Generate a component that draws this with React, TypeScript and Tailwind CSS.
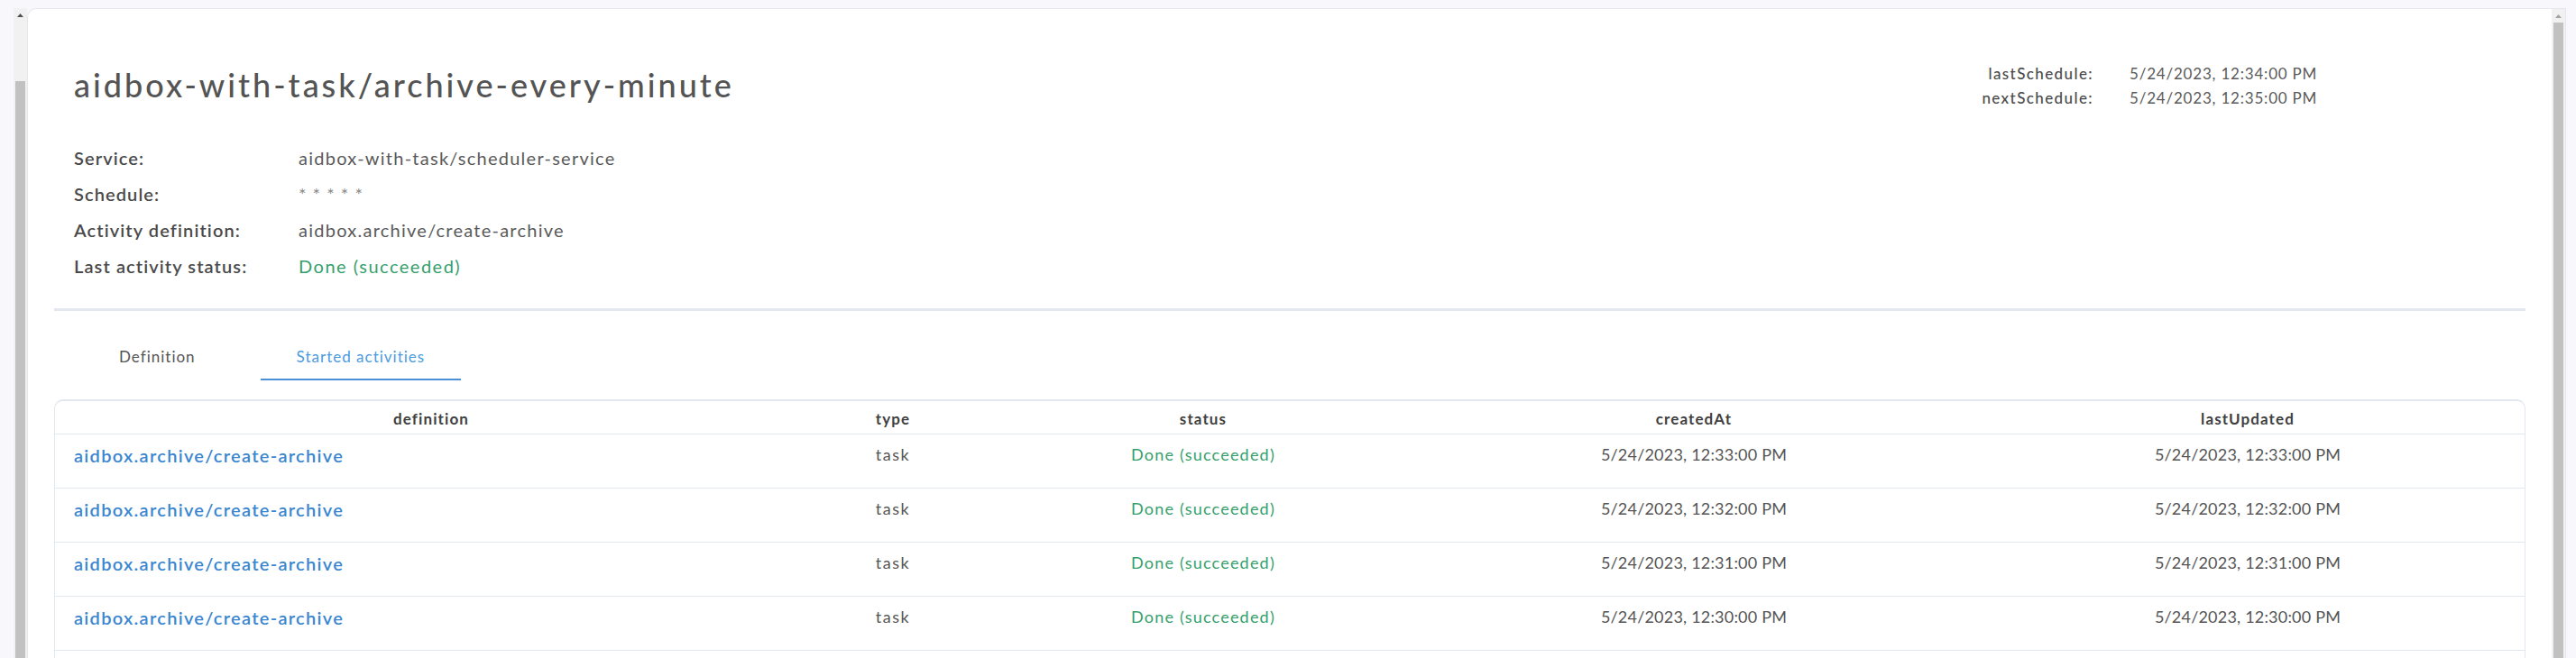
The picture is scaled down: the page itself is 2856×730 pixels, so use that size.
import React from 'react';

interface Activity {
    id: number;
    definition: string;
    type: string;
    status: string;
    createdAt: string;
    lastUpdated: string;
}

const activities: Activity[] = [
    { id: 1, definition: 'aidbox.archive/create-archive', type: 'task', status: 'Done (succeeded)', createdAt: '5/24/2023, 12:33:00 PM', lastUpdated: '5/24/2023, 12:33:00 PM' },
    { id: 2, definition: 'aidbox.archive/create-archive', type: 'task', status: 'Done (succeeded)', createdAt: '5/24/2023, 12:32:00 PM', lastUpdated: '5/24/2023, 12:32:00 PM' },
    { id: 3, definition: 'aidbox.archive/create-archive', type: 'task', status: 'Done (succeeded)', createdAt: '5/24/2023, 12:31:00 PM', lastUpdated: '5/24/2023, 12:31:00 PM' },
    { id: 4, definition: 'aidbox.archive/create-archive', type: 'task', status: 'Done (succeeded)', createdAt: '5/24/2023, 12:30:00 PM', lastUpdated: '5/24/2023, 12:30:00 PM' },
];

const details = [
    { label: 'Service:', value: 'aidbox-with-task/scheduler-service', kind: 'text' },
    { label: 'Schedule:', value: '* * * * *', kind: 'cron' },
    { label: 'Activity definition:', value: 'aidbox.archive/create-archive', kind: 'text' },
    { label: 'Last activity status:', value: 'Done (succeeded)', kind: 'status' },
];

function Scrollbar({ scrolled }: { scrolled: boolean }) {
    return (
        <div className="flex w-[15px] shrink-0 flex-col bg-[#f1f1f1]">
            <div className="flex h-[15px] shrink-0 items-center justify-center">
                <svg width="7" height="4" viewBox="0 0 7 4">
                    <path d="M3.5 0L7 4H0z" fill={scrolled ? '#505050' : '#a3a3a3'} />
                </svg>
            </div>
            <div className={`mx-[2px] flex-1 bg-[#c1c1c1] ${scrolled ? 'mt-[66px]' : 'mt-0'}`} />
        </div>
    );
}

export default function App() {
    return (
        <div className="flex h-[730px] overflow-hidden bg-[#f8f8fc] pl-[15px] pr-[11px] pt-[9px] font-['Lato',sans-serif]">
            <Scrollbar scrolled />

            <div className="flex flex-1 overflow-hidden rounded-tl-[10px] border-x border-t border-[#e4e7ee] bg-white">
                <main className="flex-1 px-[29px]">
                    {/* Header */}
                    <section className="border-b-[3px] border-[#e3e8f0] px-[22px] pb-[27px] pt-[58px]">
                        <div className="flex items-start">
                            <h1 className="mt-[4px] text-[36px] leading-[44px] font-medium tracking-[3px] text-[#545454]">
                                aidbox-with-task/archive-every-minute
                            </h1>
                            <div className="ml-auto mr-[197px] grid grid-cols-[140px_220px] gap-x-[40px] text-[17px] leading-[27px]">
                                <span className="text-right font-medium tracking-[1.4px] text-[#4a4a4a]">lastSchedule:</span>
                                <span className="tracking-[0.8px] text-[#5a5a5a]">5/24/2023, 12:34:00 PM</span>
                                <span className="text-right font-medium tracking-[1.4px] text-[#4a4a4a]">nextSchedule:</span>
                                <span className="tracking-[0.8px] text-[#5a5a5a]">5/24/2023, 12:35:00 PM</span>
                            </div>
                        </div>

                        <dl className="mt-[33px] grid grid-cols-[249px_1fr] text-[20px] leading-[40px]">
                            {details.map((d) => (
                                <React.Fragment key={d.label}>
                                    <dt className="font-semibold tracking-[1.1px] text-[#4a4a4a]">{d.label}</dt>
                                    <dd
                                        className={
                                            d.kind === 'status'
                                                ? 'tracking-[1.5px] text-[#35a06c]'
                                                : d.kind === 'cron'
                                                    ? 'tracking-[1px] text-[#8a8a8a]'
                                                    : 'tracking-[1.25px] text-[#5a5a5a]'
                                        }
                                    >
                                        {d.value}
                                    </dd>
                                </React.Fragment>
                            ))}
                        </dl>
                    </section>

                    {/* Tabs */}
                    <nav className="mt-[24px] flex text-[17px] leading-[24px] tracking-[1px]">
                        <button className="ml-[32px] border-b-2 border-transparent px-[40px] pb-[12px] pt-[15px] text-[#555555]">
                            Definition
                        </button>
                        <button className="ml-[32px] border-b-2 border-[#4a90d9] px-[40px] pb-[12px] pt-[15px] text-[#4a9be0]">
                            Started activities
                        </button>
                    </nav>

                    {/* Table */}
                    <div className="mt-[21px] rounded-t-[10px] border-x border-t-2 border-[#e3e8f0]">
                        <div className="grid h-[37px] grid-cols-[834px_190px_498px_590px_1fr] border-b border-[#e3e8f0] pt-[8px] text-center text-[17px] leading-[24px] font-bold tracking-[1.1px] text-[#3f3f3f]">
                            <span>definition</span>
                            <span>type</span>
                            <span>status</span>
                            <span>createdAt</span>
                            <span className="pl-[12px]">lastUpdated</span>
                        </div>
                        {activities.map((a) => (
                            <div
                                key={a.id}
                                className="grid h-[60px] grid-cols-[834px_190px_498px_590px_1fr] items-start border-b border-[#e3e8f0] text-center text-[18px] leading-[24px] text-[#555555]"
                            >
                                <a className="pl-[21px] pt-[11px] text-left text-[20px] font-semibold tracking-[1.3px] text-[#3a86d0]">
                                    {a.definition}
                                </a>
                                <span className="pt-[10px] tracking-[1.5px]">{a.type}</span>
                                <span className="pt-[10px] tracking-[1.2px] text-[#35a06c]">{a.status}</span>
                                <span className="pt-[10px] tracking-[0.2px]">{a.createdAt}</span>
                                <span className="pl-[12px] pt-[10px] tracking-[0.2px]">{a.lastUpdated}</span>
                            </div>
                        ))}
                        <div className="h-[20px]" />
                    </div>
                </main>

                <Scrollbar scrolled={false} />
            </div>
        </div>
    );
}
